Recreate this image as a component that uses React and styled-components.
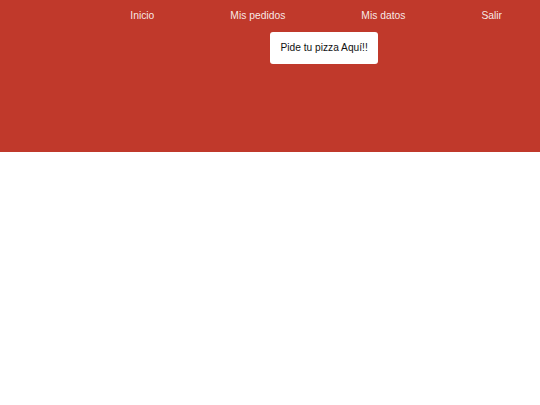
import React from "react";
import styled, { createGlobalStyle } from "styled-components";

const GlobalStyle = createGlobalStyle`
  html, body {
    margin: 0;
    padding: 0;
    background: #ffffff;
    font-family: "Liberation Sans", Arial, sans-serif;
  }
`;

const Header = styled.header`
  display: flex;
  flex-direction: column;
  align-items: flex-start;
  height: 152px;
  background: #c0392b;
  box-sizing: border-box;
  padding-top: 10px;
`;

const Nav = styled.ul`
  display: flex;
  justify-content: flex-end;
  align-self: stretch;
  gap: 76px;
  list-style: none;
  margin: 0;
  padding: 0 38px 0 0;
`;

const NavItem = styled.li`
  font-size: 10.3px;
  line-height: 12px;
  color: rgba(255, 255, 255, 0.9);
  cursor: pointer;
`;

const OrderButton = styled.button`
  margin: 10px 0 0 270px;
  padding: 10px 10.5px;
  border: none;
  border-radius: 3px;
  background: #ffffff;
  color: #111111;
  font-family: "Liberation Sans", Arial, sans-serif;
  font-size: 10.2px;
  line-height: 11.5px;
  cursor: pointer;
`;

const App = () => {
  const links = ["Inicio", "Mis pedidos", "Mis datos", "Salir"];

  return (
    <>
      <GlobalStyle />
      <Header>
        <Nav>
          {links.map((l) => (
            <NavItem key={l}>{l}</NavItem>
          ))}
        </Nav>
        <OrderButton>Pide tu pizza Aquí!!</OrderButton>
      </Header>
    </>
  );
};

export default App;
